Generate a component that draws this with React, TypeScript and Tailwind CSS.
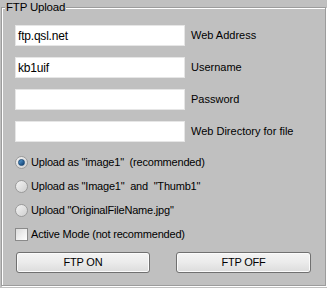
import React from "react";

const font = { fontFamily: '"Liberation Sans", Arial, sans-serif' };

function Field({ value, label }: { value: string; label: string }) {
  return (
    <div className="flex items-center h-[21px]">
      <div className="w-[170px] h-[21px] bg-white border border-[#e6e6e6] flex items-center pl-[2px] text-[12px] tracking-[-0.2px] text-black">
        {value}
      </div>
      <div className="ml-[6px] text-[11px] text-black">{label}</div>
    </div>
  );
}

function Radio({ checked, label }: { checked?: boolean; label: string }) {
  return (
    <div className="flex items-center h-[16px]">
      <div className="w-[13px] h-[13px] rounded-full border border-[#9a9a9a] bg-gradient-to-br from-[#f4f4f4] to-[#cfcfcf] flex items-center justify-center">
        {checked && (
          <div className="w-[7px] h-[7px] rounded-full bg-gradient-to-br from-[#5aa0d8] to-[#0d3c6e] border border-[#1b4a78]" />
        )}
      </div>
      <div className="ml-[3px] text-[11px] tracking-[-0.2px] text-black whitespace-pre">{label}</div>
    </div>
  );
}

export default function App() {
  return (
    <div className="w-[327px] h-[288px] bg-[#c0c0c0] pt-[7px] pl-[1px] pr-[1px]" style={font}>
      <div className="relative h-[279px] border border-[#9c9c9c] shadow-[inset_1px_1px_0_#ffffff,1px_1px_0_#ffffff] pl-[13px] pt-[17px]">
        <div className="absolute -top-[8px] left-[3px] px-[1px] bg-[#c0c0c0] text-[11.5px] tracking-[-0.2px] leading-[14px] text-black">
          FTP Upload
        </div>
        <div className="flex flex-col gap-[11px]">
          <Field value="ftp.qsl.net" label="Web Address" />
          <Field value="kb1uif" label="Username" />
          <Field value="" label="Password" />
          <Field value="" label="Web Directory for file" />
        </div>
        <div className="flex flex-col gap-[8px] mt-[12px]">
          <Radio checked label={'Upload as "image1"  (recommended)'} />
          <Radio label={'Upload as "Image1"  and  "Thumb1"'} />
          <Radio label={'Upload "OriginalFileName.jpg"'} />
          <div className="flex items-center h-[16px]">
            <div className="w-[13px] h-[13px] border border-[#8a8a8a] bg-gradient-to-br from-[#dcdcdc] to-[#ffffff]" />
            <div className="ml-[3px] text-[11px] tracking-[-0.2px] text-black">Active Mode (not recommended)</div>
          </div>
        </div>
        <div className="flex gap-[26px] mt-[10px] ml-[1px]">
          <button className="w-[134px] h-[21px] rounded-[3px] border border-[#707070] bg-gradient-to-b from-[#f4f4f4] via-[#ebebeb] to-[#dcdcdc] text-[11px] tracking-[-0.2px] text-black shadow-[inset_0_0_0_1px_#fbfbfb]">
            FTP ON
          </button>
          <button className="w-[135px] h-[21px] rounded-[3px] border border-[#707070] bg-gradient-to-b from-[#f4f4f4] via-[#ebebeb] to-[#dcdcdc] text-[11px] tracking-[-0.2px] text-black shadow-[inset_0_0_0_1px_#fbfbfb]">
            FTP OFF
          </button>
        </div>
      </div>
    </div>
  );
}
